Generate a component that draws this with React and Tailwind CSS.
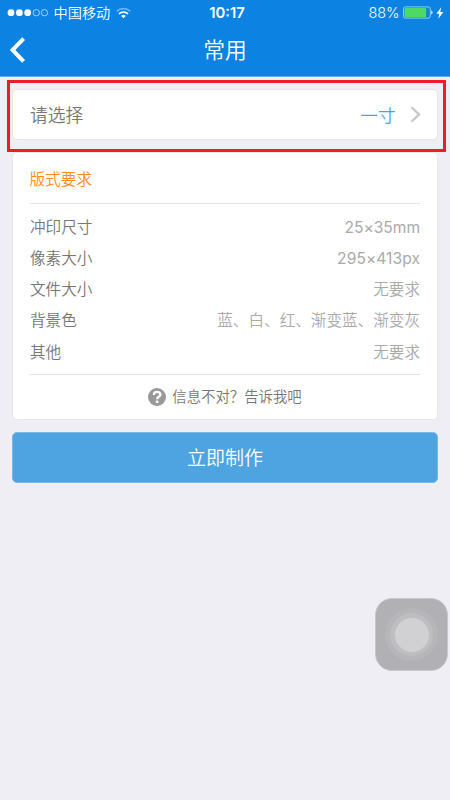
const rows = [
  ['冲印尺寸', '25×35mm', 'font-normal tracking-[-0.05px]'],
  ['像素大小', '295×413px', 'font-normal tracking-[0.05px]'],
  ['文件大小', '无要求', ''],
  ['背景色', '蓝、白、红、渐变蓝、渐变灰', ''],
  ['其他', '无要求', ''],
];

function StatusBar() {
  return (
    <div className="grid h-[25px] grid-cols-[1fr_auto_1fr] grid-rows-[25px] items-center pr-[6px] pl-[7px] text-[14.2px] leading-[25px]">
      <div className="flex items-center">
        <svg width="41" height="8" viewBox="0 0 41 8" fill="#fff">
          <circle cx="4" cy="3.700" r="3.400" />
          <circle cx="12.400" cy="3.700" r="3.400" />
          <circle cx="20.700" cy="3.700" r="3.400" />
          <circle cx="29.300" cy="3.700" r="3.200" fill="none" stroke="#fff" strokeWidth=".6" />
          <circle cx="37.500" cy="3.700" r="3.200" fill="none" stroke="#fff" strokeWidth=".6" />
        </svg>
        <span className="ml-[5.500px]">中国移动</span>
        <svg className="ml-[6px]" width="15" height="12" viewBox="0 0 15 12" fill="none" stroke="#fff" strokeWidth="1.6">
          <path d="M.7 4.3a10 10 0 0 1 13.6 0" opacity=".4" />
          <path d="M3 6.8a6.5 6.5 0 0 1 9 0" />
          <path d="M7.5 11.2 5.2 8.9a3.3 3.3 0 0 1 4.6 0z" fill="#fff" stroke="none" />
        </svg>
      </div>
      <span className="pt-0.5 pl-[3px] text-[14.8px] font-semibold">10:17</span>
      <div className="flex items-center justify-end">
        <span className="text-[14.4px]">88%</span>
        <svg className="ml-[3.500px]" width="30" height="13" viewBox="0 0 30 13">
          <rect x=".5" y=".9" width="26.8" height="11.2" rx="2" fill="none" stroke="#a6d2f5" strokeWidth=".9" />
          <rect x="1.5" y="1.9" width="21.7" height="9.3" rx="1" fill="#4cd964" />
          <path d="M28.2 4.5c1.8.4 1.8 3.6 0 4z" fill="#d3e8fa" />
        </svg>
        <svg className="ml-[3px]" width="8" height="12" viewBox="0 0 8 12" fill="#fff">
          <path d="M5.2.3.4 6.7h2.9L2.3 11.7 7.4 5H4.3z" />
        </svg>
      </div>
    </div>
  );
}

export default function App() {
  return (
    <div className="relative h-[800px] w-[450px] overflow-hidden bg-[#efeef4] font-['Inter','Noto_Sans_CJK_SC',sans-serif] font-[350]">
      <header className="h-[77px] border-b border-[#62aeea] bg-[#0c82e3] text-white">
        <StatusBar />
        <div className="grid h-[50px] grid-cols-[60px_1fr_60px] items-center">
          <button aria-label="返回" className="pl-[10px]">
            <svg width="16" height="26" viewBox="0 0 16 26" fill="none" stroke="#fff" strokeWidth="4">
              <path d="M13.6 1.7 2.5 13l11.1 11.3" />
            </svg>
          </button>
          <h1 className="text-center text-[21.8px] leading-[50px]">常用</h1>
        </div>
      </header>

      <main className="flex flex-col px-3 pt-3">
        <section className="flex h-[51px] items-center rounded-[5px] border border-[#e6e6e9] bg-white pr-[16.500px] pl-[17px] text-[17.8px]">
          <span className="pt-[4px] text-[#777]">请选择</span>
          <span className="ml-auto pt-[3px] text-[17.6px] text-[#4ea3e1]">一寸</span>
          <svg className="ml-[14px]" width="11" height="17" viewBox="0 0 11 17" fill="none" stroke="#c7c7cb" strokeWidth="2.3">
            <path d="M1.5 1.2 9 8.5l-7.500 7.300" />
          </svg>
        </section>

        <section className="mt-3 h-[268px] rounded-[5px] border border-[#e9e9eb] bg-white px-[17px] text-[15.6px]">
          <h2 className="-ml-[0.500px] h-[51px] border-b border-[#e4e4e6] pt-px leading-[51px] text-[#ff8c1a]">版式要求</h2>
          <dl className="h-[171px] border-b border-[#e4e4e6] pt-[8px]">
            {rows.map(([label, value, style]) => (
              <div key={label} className="flex h-[31.2px] items-center justify-between">
                <dt className="text-[#777]">{label}</dt>
                <dd className={`text-[#aaa] ${style}`}>{value}</dd>
              </div>
            ))}
          </dl>
          <div className="flex h-[44px] items-center justify-center text-[14.4px] text-[#777]">
            <svg className="mr-[6px]" width="18" height="18" viewBox="0 0 18 18">
              <circle cx="9" cy="9" r="9" fill="#999" />
              <path d="M5.800 7c0-4.200 6.600-3.900 6.600-.5 0 2.300-3.300 2.100-3.300 4.700" fill="none" stroke="#fff" strokeWidth="2.300" />
              <rect x="7.900" y="12.500" width="2.500" height="2.500" rx=".6" fill="#fff" />
            </svg>
            信息不对？告诉我吧
          </div>
        </section>

        <button className="mt-3 h-[51px] rounded-[5px] border border-[#78b8e8] bg-[#4ea3e1] pt-[3px] text-[19px] text-white">立即制作</button>
      </main>

      <div className="absolute top-[79.500px] left-[7px] h-[72px] w-[438.500px] border-3 border-[#ee1c25]" />
      <div className="absolute top-[598px] left-[375px] flex size-[73px] items-center justify-center rounded-[17px] border border-[#c8c8cc] bg-[#b1b1b5]">
        <div className="flex size-[53px] items-center justify-center rounded-full bg-[#b6b6b9]">
          <div className="flex size-[43px] items-center justify-center rounded-full bg-[#bebec0]">
            <div className="size-[34px] rounded-full bg-[#d1d1d3]" />
          </div>
        </div>
      </div>
    </div>
  );
}
